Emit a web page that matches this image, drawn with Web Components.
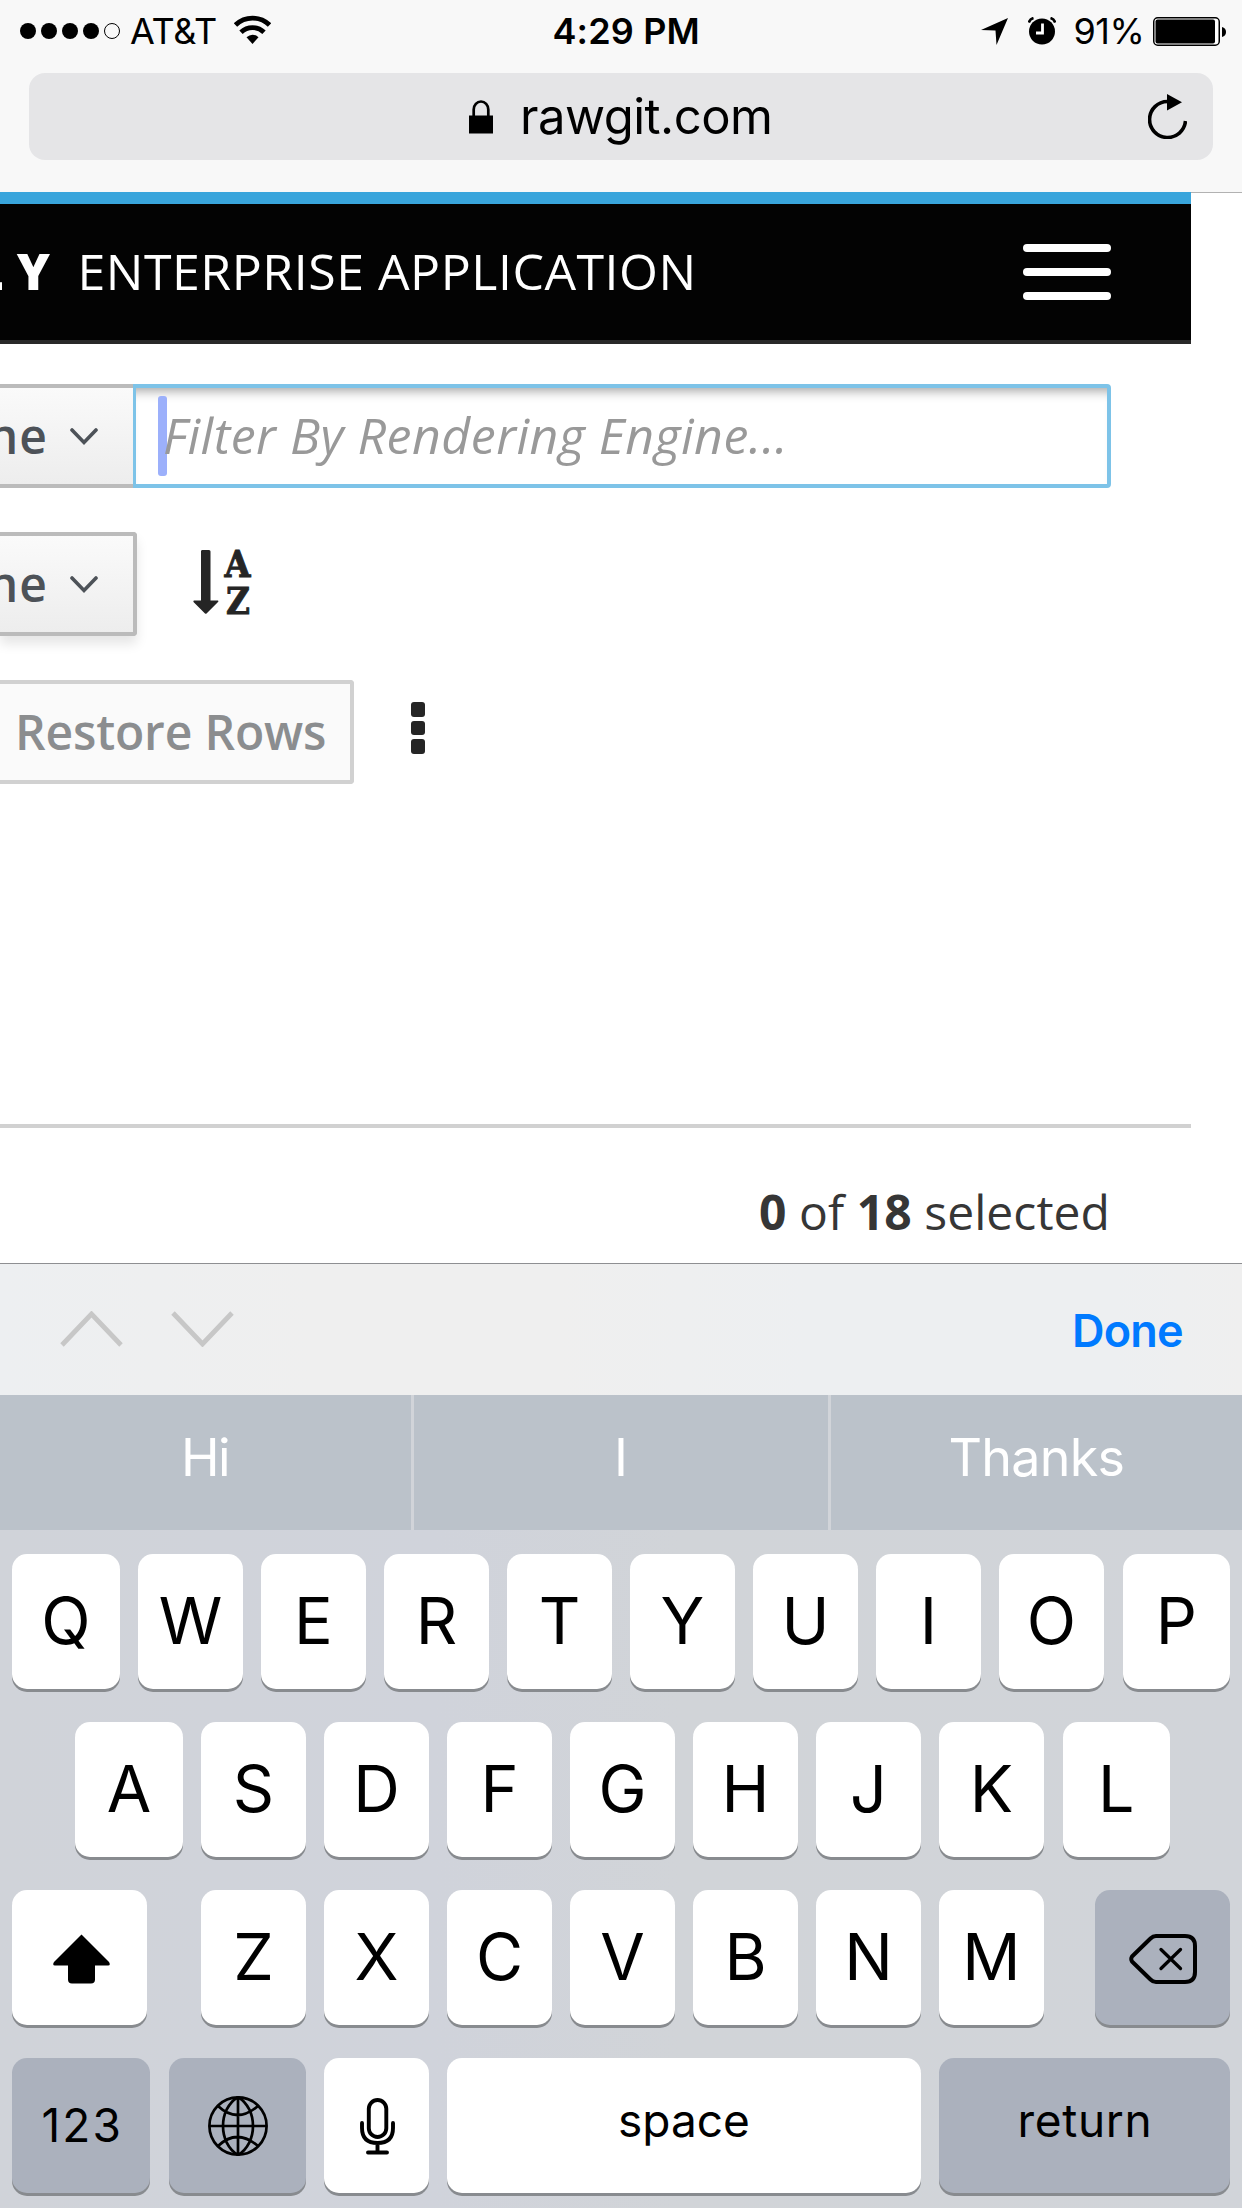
<!DOCTYPE html>
<html lang="en"><head><meta charset="utf-8"><title>rawgit.com</title>
<style>
html,body{margin:0;padding:0;background:#fff}
body{width:1242px;height:2208px;overflow:hidden;font-family:Inter,"Liberation Sans",sans-serif;color:#000}
</style></head><body>
<phone-screen></phone-screen>
<script>
const define=(name,html,ready)=>customElements.define(name,class extends HTMLElement{
  constructor(){super();this.attachShadow({mode:'open'}).innerHTML=html}
  connectedCallback(){if(ready)ready.call(this,this.shadowRoot)}
});

/* One line of text whose inked width equals the "w" attribute. */
const ctx=document.createElement('canvas').getContext('2d');
define('fit-text','<style>:host{display:block;flex:none;white-space:nowrap}span{display:block;width:max-content}</style><span><slot></slot></span>',function(root){
  const text=this.textContent,w=+this.getAttribute('w'),cs=getComputedStyle(this);
  ctx.font=`${cs.fontStyle} ${cs.fontWeight} ${cs.fontSize} ${cs.fontFamily}`;
  const m=ctx.measureText(text),ink=m.actualBoundingBoxRight+m.actualBoundingBoxLeft;
  this.style.width=w+'px';
  const s=root.querySelector('span');
  if(text.length>1)s.style.letterSpacing=(w-ink)/(text.length-1)+'px';
  s.style.marginLeft=m.actualBoundingBoxLeft+'px';
});

define('status-bar',`<style>
:host{display:flex;height:60px;font-size:36px;line-height:60px;align-items:center;padding:1px 17px 0 20px}
.dots{display:flex;gap:5px;margin-right:10px}
.dots i{width:16px;height:16px;border-radius:50%;background:#000;box-sizing:border-box}
.dots i:last-child{background:none;border:1px solid #000}
.side{display:flex;align-items:center;width:533.5px}
.side.r{width:auto;flex:1;justify-content:flex-end;margin-right:-1.5px}
svg{display:block;flex:none}
b{font-weight:600}
</style>
<div class="side"><div class="dots"><i></i><i></i><i></i><i></i><i></i></div><fit-text w="86">AT&amp;T</fit-text>
<svg style="margin-left:18px" width="37" height="32" viewBox="0 0 37 32"><path d="M1.500 10A24.500 24.500 0 0 1 35.500 10" fill="none" stroke="#000" stroke-width="4.800"/><path d="M7 17.200A16.500 16.500 0 0 1 30 17.200" fill="none" stroke="#000" stroke-width="4.800"/><path d="M12.500 22.300Q18.500 17 24.500 22.300L18.500 29Z"/></svg></div>
<b><fit-text w="144">4:29 PM</fit-text></b>
<div class="side r">
<svg width="27" height="27" viewBox="0 0 27 27"><path d="M27 0L15.500 27L14.500 12.500L0 12Z"/></svg>
<svg style="margin-left:20px" width="28" height="28" viewBox="0 0 28 28"><circle cx="14" cy="14.500" r="13"/><path d="M.8 5.500A7 7 0 0 1 5.500 1M27.200 5.500A7 7 0 0 0 22.500 1" fill="none" stroke="#000" stroke-width="2.600"/><path d="M14.500 6.500V16H8" fill="none" stroke="#fff" stroke-width="2.800"/></svg>
<fit-text w="66" style="margin-left:20px">91%</fit-text>
<svg style="margin-left:11px" width="74" height="29" viewBox="0 0 74 29"><rect x=".75" y=".75" width="65.500" height="27.500" rx="4" fill="#fff" stroke="#000" stroke-width="1.500"/><rect x="2.500" y="2.500" width="59.500" height="24" rx="2"/><path d="M69 10q4 1 4 5t-4 5Z"/></svg></div>`);

define('address-bar',`<style>
:host{display:block;padding:12px 29px 0;border-bottom:1px solid #b2b2b2;height:119px}
div{height:87px;border-radius:16px;background:#e5e5e7;display:flex;align-items:center;padding:0 26px 0 440px;font-size:49px;line-height:87px}
svg{display:block;flex:none}
fit-text{margin:0 auto 0 30px}
</style><div><svg width="24" height="34" viewBox="0 0 24 34"><path d="M4.700 16V9.500a7.300 8 0 0 1 14.600 0V16" fill="none" stroke="#000" stroke-width="2.700"/><path d="M0 15.500H24V33.500H0Z"/></svg>
<fit-text w="247">rawgit.com</fit-text>
<svg width="39" height="45" viewBox="0 0 39 45"><path d="M19.500 7.500A18 18 0 1 0 37.500 27" fill="none" stroke="#000" stroke-width="3.600"/><path d="M19 0L34 8.200L19 16.500Z"/></svg></div>`);

define('app-header',`<style>
:host{display:flex;box-sizing:border-box;width:1191px;height:152px;margin-top:-1px;border-top:12px solid #39a5dc;border-bottom:4px solid #292929;background:#030303;color:#fff;font:50px/136px "Open Sans",sans-serif;align-items:center;overflow:hidden}
.brand{width:50px;display:flex;justify-content:flex-end;font-weight:800;letter-spacing:13px;white-space:nowrap;position:relative;top:-1px}
.brand span{margin-right:-13px}
fit-text{margin:0 331px 0 31.500px;height:136px;position:relative;top:-1px}
.menu{display:flex;flex-direction:column;gap:16px}
.menu i{width:88px;height:8px;border-radius:4px;background:#fff}
</style><div class="brand"><span>LY</span></div><fit-text w="610">ENTERPRISE APPLICATION</fit-text><div class="menu"><i></i><i></i><i></i></div>`);

define('drop-button',`<style>
:host{display:flex;box-sizing:border-box;height:104px;width:137px;border:4px solid #bbb;border-left:0;border-radius:0 4px 4px 0;background:linear-gradient(#fafafa,#ededed);color:#4d5258;font:600 48px/96px "Open Sans",sans-serif;align-items:center;overflow:hidden;box-shadow:0 8px 12px rgba(3,3,3,.1);flex:none}
:host([joined]){width:133px;border-right:0;border-radius:0;box-shadow:none}
div{width:48px;display:flex;justify-content:flex-end;flex:none;letter-spacing:1px}
svg{margin-left:21.500px;flex:none;position:relative;top:1px}
</style><div><slot></slot></div><svg width="28" height="18" viewBox="0 0 28 18"><path d="M2 2L14 14.500L26 2" fill="none" stroke="#4d5258" stroke-width="3.600" stroke-linecap="round"/></svg>`);

define('tool-bar',`<style>
:host{display:flex;flex-direction:column;gap:44px;padding-top:40px;height:740px;box-sizing:border-box;width:1191px}
.row{display:flex;height:104px;align-items:center}
.input{box-sizing:border-box;width:978px;height:104px;border:4px solid #7dc3e8;border-left-width:3px;border-radius:0 4px 4px 0;box-shadow:inset 0 12px 11px -9px rgba(3,3,3,.36);display:flex;align-items:center;padding-left:22px;color:#999;font:italic 50px/96px "Open Sans",sans-serif}
.caret{width:9px;height:80px;border-radius:3px;background:#9cb0fb;margin-right:-2px}
.input fit-text{position:relative;top:-1px}
.restore{box-sizing:border-box;width:354px;height:104px;border:4px solid #d1d1d1;border-left:0;border-radius:0 4px 4px 0;background:#fafafa;color:#8b8d8f;font:600 48px/96px "Open Sans",sans-serif;padding-left:19px;margin-right:57px}
.keb{display:flex;flex-direction:column;gap:4px;margin-top:-8px}
.keb i{width:14px;height:14.500px;border-radius:3px;background:#252525}
.sort{margin:-4px 0 0 56px}
</style>
<div class="row"><drop-button joined>ne</drop-button><div class="input"><div class="caret"></div><fit-text w="617">Filter By Rendering Engine...</fit-text></div></div>
<div class="row"><drop-button>ne</drop-button><svg class="sort" width="60" height="66" viewBox="0 0 60 66" fill="#252525" stroke="#252525" font-family="DejaVu Serif" font-weight="700" font-size="36.500"><path stroke="none" d="M9 1H16Q17.500 1 17.500 2.500V51.500H25Q26 52 25 53L13.500 64.500Q13 65 12 64.500L.5 53Q0 51.500 1 51.500H8V2.500Q8 1 9 1Z"/><text stroke-width=".9" x="31.500" y="28" textLength="26" lengthAdjust="spacingAndGlyphs">A</text><text stroke-width=".9" x="33" y="65" textLength="24" lengthAdjust="spacingAndGlyphs">Z</text></svg></div>
<div class="row"><div class="restore"><fit-text w="306">Restore Rows</fit-text></div><div class="keb"><i></i><i></i><i></i></div></div>`);

define('selection-count',`<style>
:host{display:block;box-sizing:border-box;width:1191px;height:139px;margin-top:40px;border-top:4px solid #d1d1d1;padding:36px 81px 0 0;text-align:right;font:48px/96px "Open Sans",sans-serif;color:#363636;letter-spacing:.05px}
</style><b>0</b> of <b>18</b> selected`);

define('form-accessory',`<style>
:host{display:flex;box-sizing:border-box;height:132px;border-top:1px solid #8e8f92;background:linear-gradient(90deg,#edeff1,#efefef 25%,#efefef 45%,#edeff1 65%,#edeff1 90%,#efefef);align-items:center;padding:0 60px}
svg{display:block;margin:-2px 48px 0 0}
fit-text{margin-left:auto;font-size:45px;font-weight:600;color:#007aff;line-height:60px;margin-top:3px}
</style><svg width="63" height="36" viewBox="0 0 63 36"><path d="M2 34L31.500 3L61 34" fill="none" stroke="#c7c7c7" stroke-width="4.800"/></svg><svg width="63" height="36" viewBox="0 0 63 36"><path d="M2 2L31.500 33L61 2" fill="none" stroke="#c7c7c7" stroke-width="4.800"/></svg><fit-text w="107">Done</fit-text>`);

define('word-bar',`<style>
:host{display:grid;grid-template-columns:411px 414px 411px;gap:3px;height:135px;background:#d1d4d9;color:#fff;font-size:52px;font-weight:370;line-height:125px}
div{background:#bbc2ca;display:flex;justify-content:center}
</style><div><fit-text w="43" style="margin-left:2px">Hi</fit-text></div><div>I</div><div><fit-text w="172">Thanks</fit-text></div>`);

define('key-cap',`<style>
:host{display:flex;flex:none;width:105px;height:135px;border-radius:15px;background:#fff;box-shadow:0 3px 0 #888b8f;align-items:center;justify-content:center;font-size:64.500px;line-height:137px}
:host([wide]){width:108px}
:host([end]){width:106.500px}
:host([dark]){background:#abb1bd}
:host([label]){font-size:46px}
</style><slot></slot>`);

const icons={
shift:'<svg width="57" height="50" viewBox="0 0 57 50"><path d="M28.500 .5L56 28Q58 31.500 55 31.500H42V45.500Q42 49.500 38 49.500H19Q15 49.500 15 45.500V31.500H2Q-1 31.500 1 28Z"/></svg>',
del:'<svg width="68" height="50" viewBox="0 0 68 50" fill="none" stroke="#000" stroke-width="4" stroke-linejoin="round" stroke-linecap="round"><path d="M27 2H56Q66 2 66 12V38Q66 48 56 48H27Q24 48 21.500 45.500L3 27.500Q1.500 25 3 22.500L21.500 4.500Q24 2 27 2Z"/><path stroke-width="3.300" d="M32 15.500L51.500 34.500M51.500 15.500L32 34.500"/></svg>',
globe:'<svg width="60" height="60" viewBox="0 0 60 60" fill="none" stroke="#000" stroke-width="2.700"><circle cx="30" cy="30" r="28.600"/><path d="M30 1V59M1 30H59M30 1C10 13 10 47 30 59M30 1C50 13 50 47 30 59M10 10Q29 28 50 10M10 50Q29 32 50 50"/></svg>',
mic:'<svg width="35" height="57" viewBox="0 0 35 57" fill="none" stroke="#000" stroke-width="3.900" stroke-linecap="round"><rect x="8.800" y="2" width="17.500" height="37" rx="8.750"/><path d="M2 25V30Q2 45 17.500 45T33 30V25M17.500 45V54M8 54.500H27"/></svg>'};

define('soft-keyboard',`<style>
:host{display:flex;flex-direction:column;gap:33px;height:678px;box-sizing:border-box;background:linear-gradient(90deg,#d0d3d9,#d0d3db 35%,#d1d4d8 55%,#d1d4d9);padding:24px 12px 0}
.row{display:flex;gap:18px}
.two{padding-left:63px}
svg{display:block}
.up{position:relative;top:-5px}
</style>
<div class="row">${[...'QWERTYUIOP'].map((c,i)=>`<key-cap ${i==0?'wide':i==9?'end style="margin-left:1px"':''}>${c}</key-cap>`).join('')}</div>
<div class="row two">${[...'ASDFGHJKL'].map((c,i)=>`<key-cap ${i==0?'wide':i==8?'end style="margin-left:1px"':''}>${c}</key-cap>`).join('')}</div>
<div class="row"><key-cap style="width:135px;margin-right:36px"><span style="margin:3px 0 0 4px">${icons.shift}</span></key-cap>${[...'ZXCVBNM'].map(c=>`<key-cap>${c}</key-cap>`).join('')}<key-cap dark style="width:135px;margin-left:33px"><span style="margin-top:2px">${icons.del}</span></key-cap></div>
<div class="row"><key-cap dark label style="width:138px"><fit-text w="75">123</fit-text></key-cap><key-cap dark style="width:137px;margin-left:1px">${icons.globe}</key-cap><key-cap><span style="margin:2px 0 0 2px">${icons.mic}</span></key-cap><key-cap label style="width:474px"><fit-text class="up" w="128">space</fit-text></key-cap><key-cap dark label style="width:291px"><fit-text class="up" w="128">return</fit-text></key-cap></div>`);

define('phone-screen',`<style>
:host{display:flex;flex-direction:column;width:1242px;height:2208px;background:#fff;overflow:hidden}
.chrome{background:#f8f8f8;display:block}
main{display:flex;flex-direction:column;height:1070px;flex:none}
</style><div class="chrome"><status-bar></status-bar><address-bar></address-bar></div>
<main><app-header></app-header><tool-bar></tool-bar><selection-count></selection-count></main>
<form-accessory></form-accessory><word-bar></word-bar><soft-keyboard></soft-keyboard>`);
</script></body></html>
